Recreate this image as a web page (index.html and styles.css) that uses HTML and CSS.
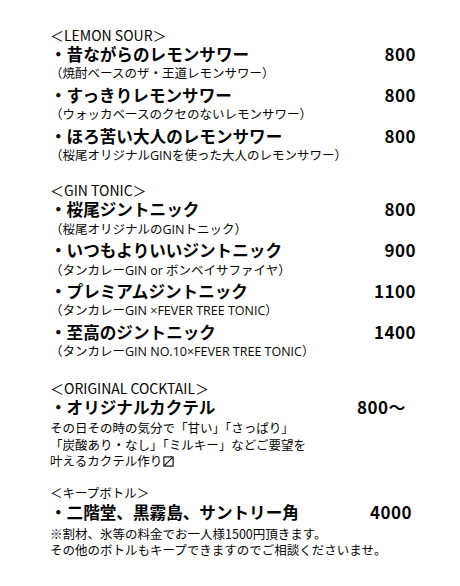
FILE: index.html
```html
<!DOCTYPE html>
<html lang="ja">
<head>
<meta charset="utf-8">
<link rel="stylesheet" href="styles.css">
</head>
<body>
<main class="menu">
  <section class="sec sec-lemon">
    <p class="head">＜LEMON SOUR＞</p>
    <div class="item"><span class="name">・昔ながらのレモンサワー</span><span class="price">800</span></div>
    <p class="desc">（焼酎ベースのザ・王道レモンサワー）</p>
    <div class="item"><span class="name">・すっきりレモンサワー</span><span class="price">800</span></div>
    <p class="desc">（ウォッカベースのクセのないレモンサワー）</p>
    <div class="item"><span class="name">・ほろ苦い大人のレモンサワー</span><span class="price">800</span></div>
    <p class="desc">（桜尾オリジナルGINを使った大人のレモンサワー）</p>
  </section>
  <section class="sec sec-gin">
    <p class="head">＜GIN TONIC＞</p>
    <div class="item"><span class="name">・桜尾ジントニック</span><span class="price">800</span></div>
    <p class="desc">（桜尾オリジナルのGINトニック）</p>
    <div class="item"><span class="name">・いつもよりいいジントニック</span><span class="price">900</span></div>
    <p class="desc">（タンカレーGIN or ボンベイサファイヤ）</p>
    <div class="item"><span class="name">・プレミアムジントニック</span><span class="price">1100</span></div>
    <p class="desc">（タンカレーGIN ×FEVER TREE TONIC）</p>
    <div class="item"><span class="name">・至高のジントニック</span><span class="price">1400</span></div>
    <p class="desc">（タンカレーGIN NO.10×FEVER TREE TONIC）</p>
  </section>
  <section class="sec sec-cocktail">
    <p class="head">＜ORIGINAL COCKTAIL＞</p>
    <div class="item item-cocktail"><span class="name">・オリジナルカクテル</span><span class="price">800〜</span></div>
    <p class="note note-first">その日その時の気分で「甘い」「さっぱり」</p>
    <p class="note">「炭酸あり・なし」「ミルキー」などご要望を</p>
    <p class="note">叶えるカクテル作り<svg class="box" viewBox="0 0 12 12" width="11" height="11"><rect x="1" y="1" width="10" height="10" fill="none" stroke="#000" stroke-width="1.2"/><line x1="1.5" y1="10.5" x2="10.5" y2="1.5" stroke="#000" stroke-width="1.2"/></svg></p>
  </section>
  <section class="sec sec-keep">
    <p class="head head-jp">＜キープボトル＞</p>
    <div class="item item-keep"><span class="name">・二階堂、黒霧島、サントリー角</span><span class="price">4000</span></div>
    <p class="note note-first">※割材、氷等の料金でお一人様1500円頂きます。</p>
    <p class="note">その他のボトルもキープできますのでご相談くださいませ。</p>
  </section>
</main>
</body>
</html>
```

FILE: styles.css
```css
html, body {
  margin: 0;
  padding: 0;
  background: #fff;
}

body {
  font-family: "Noto Sans CJK JP", "Noto Sans", sans-serif;
  color: #050505;
}

.menu {
  width: 366px;
  padding: 26px 0 0 50px;
}

.sec p {
  margin: 0;
}

.sec-gin {
  margin-top: 15px;
}

.sec-cocktail {
  margin-top: 17px;
}

.sec-keep {
  margin-top: 14px;
}

.head {
  font-size: 14px;
  line-height: 18px;
  height: 18px;
}

.head-jp {
  font-size: 12.5px;
  margin-left: -3px;
}

.item {
  display: flex;
  justify-content: space-between;
  align-items: baseline;
  font-size: 16.6px;
  font-weight: bold;
  line-height: 20.4px;
  height: 20.4px;
}

.price {
  font-size: 17px;
  letter-spacing: 0.5px;
}

.item-cocktail .price {
  margin-right: 10px;
}

.item-keep .price {
  margin-right: 4px;
}

.desc {
  font-family: "Open Sans", "Noto Sans CJK JP", sans-serif;
  font-size: 12.5px;
  line-height: 20.4px;
  height: 20.4px;
  margin-left: -4px;
  white-space: nowrap;
}

.note {
  font-size: 12.5px;
  line-height: 16.8px;
  margin-left: -3px;
  white-space: nowrap;
}

.sec-cocktail .note-first {
  margin-top: 2px;
}

.sec-keep .note-first {
  margin-top: 3px;
}

.box {
  vertical-align: -1px;
  margin-left: 1px;
}
```
